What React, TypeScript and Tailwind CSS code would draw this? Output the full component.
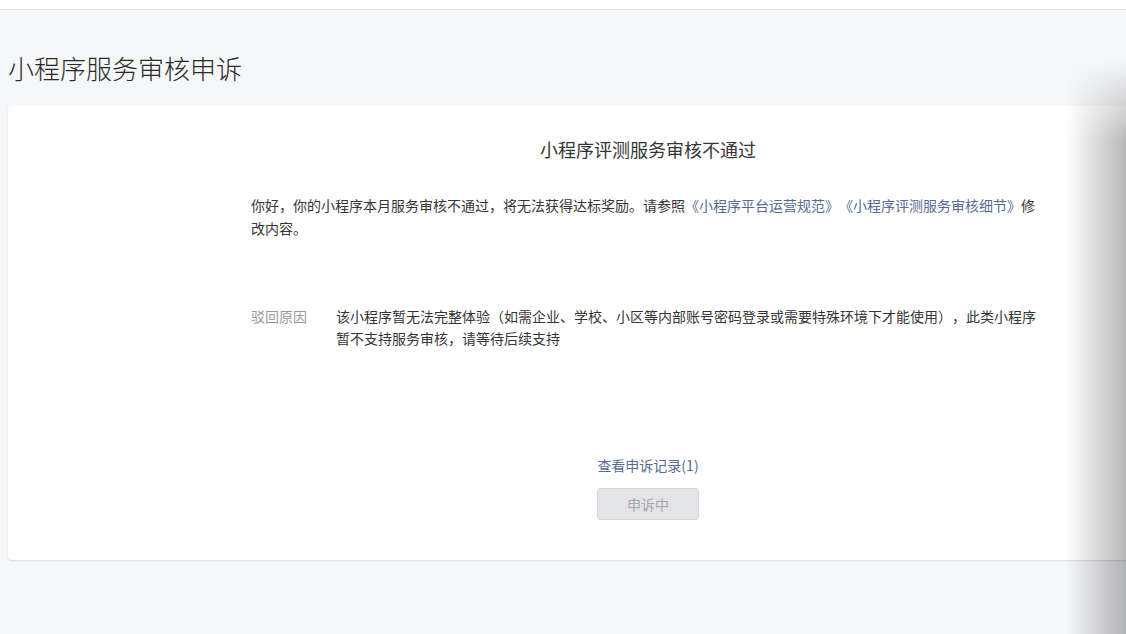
import React from 'react';

const font = "font-['PingFang_SC','Noto_Sans_CJK_SC','Liberation_Sans',sans-serif] [text-spacing-trim:space-all]";

export default function App() {
  return (
    <div className={`relative h-[634px] w-[1126px] overflow-hidden bg-[#f6f7f9] ${font}`}>
      {/* top bar */}
      <div className="h-[10px] border-b border-[#e3e4e7] bg-white" />

      {/* page title */}
      <h1 className="ml-[8px] mt-[41px] text-[26px] font-light leading-[34px] text-[#2a2a2a]">
        小程序服务审核申诉
      </h1>

      {/* card */}
      <div className="ml-[8px] mt-[21px] w-[1280px] rounded-[4px] bg-white pb-[40px] pt-[29px] shadow-[0_1px_2px_rgba(0,0,0,0.12)]">
        <div className="mx-auto w-[794px]">
          <h2 className="text-center text-[18px] font-normal leading-[28px] text-[#353535]">
            小程序评测服务审核不通过
          </h2>

          <p className="mt-[31px] text-[14px] leading-[23px] text-[#353535]">
            你好，你的小程序本月服务审核不通过，将无法获得达标奖励。请参照
            <a className="text-[#576b95]">《小程序平台运营规范》</a>
            <a className="text-[#576b95]">《小程序评测服务审核细节》</a>
            修改内容。
          </p>

          <div className="mt-[65px] flex text-[14px] leading-[22px]">
            <div className="w-[85px] shrink-0 text-[#9a9a9a]">驳回原因</div>
            <div className="flex-1 text-[#353535]">
              该小程序暂无法完整体验（如需企业、学校、小区等内部账号密码登录或需要特殊环境下才能使用），此类小程序暂不支持服务审核，请等待后续支持
            </div>
          </div>

          <div className="mt-[105px] flex flex-col items-center">
            <a className="text-[14px] leading-[22px] text-[#576b95]">查看申诉记录(1)</a>
            <button
              disabled
              className="mt-[12px] h-[32px] w-[102px] rounded-[3px] border border-[#d6d7dc] bg-[#e3e4e8] text-[14px] text-[#a5a6aa]"
            >
              申诉中
            </button>
          </div>
        </div>
      </div>

      {/* drawer edge shadow */}
      <div className="pointer-events-none absolute bottom-0 right-0 top-[60px] w-[60px] bg-gradient-to-r from-transparent to-[rgba(0,0,0,0.28)] [mask-image:linear-gradient(to_bottom,transparent,black_80px)]" />
    </div>
  );
}
